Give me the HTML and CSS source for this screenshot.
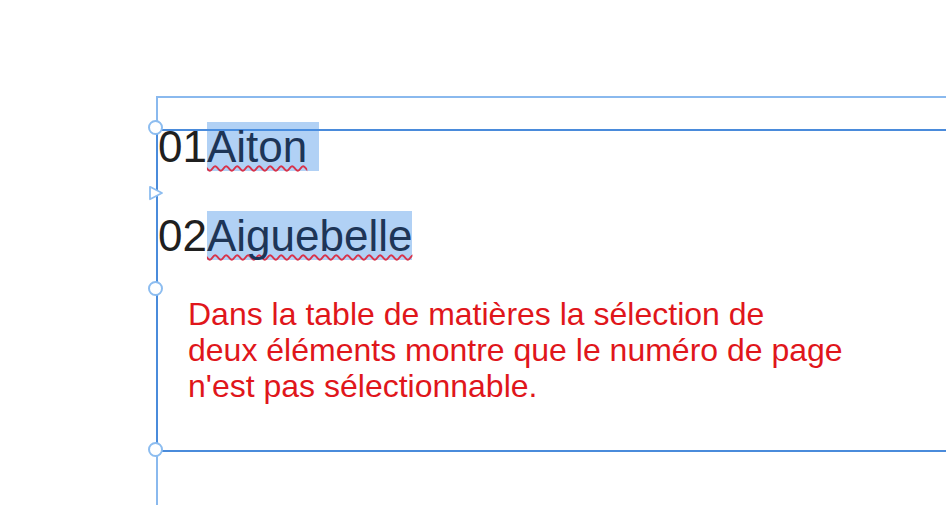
FILE: index.html
```html
<!DOCTYPE html>
<html lang="fr">
<head>
<meta charset="utf-8">
<title>Table des matières</title>
<link rel="stylesheet" href="styles.css">
</head>
<body>
<div class="outer">
  <div class="inner">
    <div class="toc">
      <div class="entry"><span class="num">01</span><span class="sel"><span class="spell">Aiton</span> </span></div>
      <div class="entry"><span class="num">02</span><span class="sel"><span class="spell">Aiguebelle</span></span></div>
    </div>
    <p class="note">Dans la table de matières la sélection de<br>deux éléments montre que le numéro de page<br>n'est pas sélectionnable.</p>
    <span class="handle h1"></span>
    <svg class="tri" width="16" height="16" viewBox="0 0 16 16"><path d="M2 1.8 L14 8 L2 14.2 Z" fill="#fff" stroke="#8dbdf0" stroke-width="1.8" stroke-linejoin="round"/></svg>
    <span class="handle h2"></span>
    <span class="handle h3"></span>
  </div>
</div>
</body>
</html>
```
FILE: styles.css
```css
html, body {
  margin: 0;
  padding: 0;
  background: #fff;
  overflow: hidden;
  height: 505px;
}
body {
  font-family: "Liberation Sans", Arial, sans-serif;
}
.outer {
  margin-left: 156px;
  margin-top: 96px;
  height: 407px;
  border-top: 2px solid #8ab9ee;
  border-left: 2px solid #8ab9ee;
}
.inner {
  position: relative;
  margin-left: -2px;
  margin-top: 31px;
  height: 319px;
  border-top: 2px solid #4a8bdb;
  border-bottom: 2px solid #4a8bdb;
  border-left: 2px solid #4a8bdb;
}
.toc {
  display: flex;
  flex-direction: column;
  gap: 40px;
  margin-top: -9px;
}
.entry {
  font-size: 44px;
  line-height: 49px;
  height: 49px;
  white-space: pre;
  color: #1f1f1f;
}
.sel {
  background: rgba(70, 145, 230, 0.42);
  color: #1d3557;
}
.spell {
  text-decoration: underline wavy #d8324a;
  text-decoration-thickness: 1.5px;
  text-decoration-skip-ink: none;
  text-underline-offset: 3px;
}
.note {
  margin: 36px 0 0 30px;
  font-size: 32px;
  line-height: 36px;
  color: #e0161b;
}
.handle {
  position: absolute;
  left: -10px;
  width: 11px;
  height: 11px;
  border: 2px solid #8dbdf0;
  border-radius: 50%;
  background: #fff;
}
.h1 { top: -11px; }
.h2 { top: 150px; }
.h3 { top: 311px; }
.tri {
  position: absolute;
  left: -10px;
  top: 54px;
}
```
